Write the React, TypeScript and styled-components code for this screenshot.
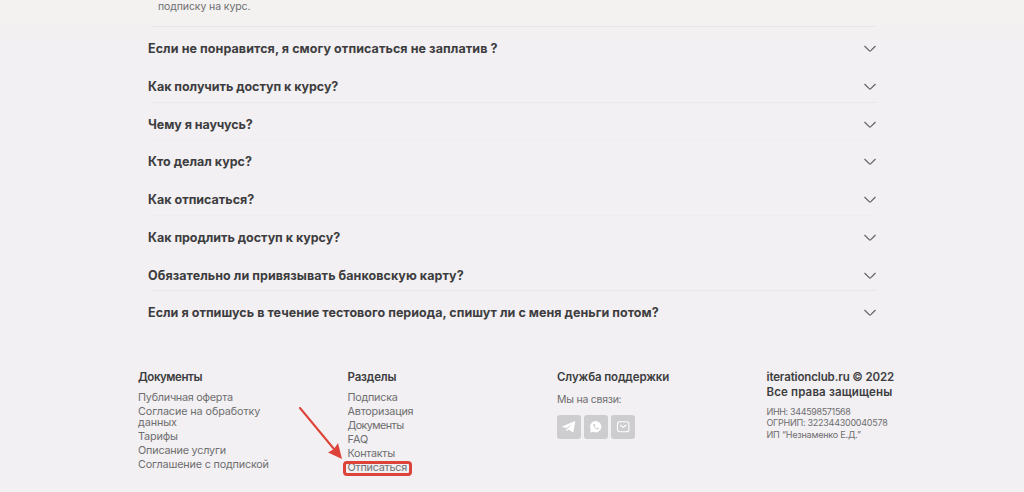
import styled, { createGlobalStyle } from 'styled-components';

interface Entry {
  text: string;
  tracking?: number;
  line?: string;
}

const colors = {
  heading: '#3d3d3f',
  text: '#6e6e70',
  line: '#e9e7e9',
  faintLine: '#eeecee',
  social: '#cdccce',
  red: '#dd4338'
};

const questions: Entry[] = [
  { text: 'Если не понравится, я смогу отписаться не заплатив ?', tracking: 0.08, line: colors.line },
  { text: 'Как получить доступ к курсу?', tracking: -0.04 },
  { text: 'Чему я научусь?', tracking: -0.06, line: colors.line },
  { text: 'Кто делал курс?', line: colors.faintLine },
  { text: 'Как отписаться?' },
  { text: 'Как продлить доступ к курсу?', tracking: -0.03, line: colors.faintLine },
  { text: 'Обязательно ли привязывать банковскую карту?', tracking: 0.06 },
  {
    text: 'Если я отпишусь в течение тестового периода, спишут ли с меня деньги потом?',
    tracking: 0.04,
    line: colors.line
  }
];

const documents: Entry[] = [
  { text: 'Публичная оферта', tracking: -0.25 },
  { text: 'Согласие на обработку данных', tracking: -0.1 },
  { text: 'Тарифы', tracking: -0.15 },
  { text: 'Описание услуги', tracking: -0.2 },
  { text: 'Соглашение с подпиской', tracking: -0.18 }
];

const sections: Entry[] = [
  { text: 'Подписка', tracking: -0.25 },
  { text: 'Авторизация', tracking: -0.2 },
  { text: 'Документы', tracking: -0.6 },
  { text: 'FAQ' },
  { text: 'Контакты', tracking: -0.3 }
];

const legal: Entry[] = [
  { text: 'ИНН: 344598571568', tracking: -0.35 },
  { text: 'ОГРНИП: 322344300040578', tracking: -0.26 },
  { text: 'ИП “Незнаменко Е.Д.”', tracking: -0.2 }
];

const GlobalStyle = createGlobalStyle`
  body {
    margin: 0;
    background: #f2f0f2;
    font-family: Inter, 'Open Sans', sans-serif;
    overflow: hidden;
  }
`;

const Page = styled.div`
  box-sizing: border-box;
  height: 492px;
  overflow: hidden;
  background: linear-gradient(#f3f2f0 0, #f3f2f0 12px, #f2f0f2 44px);
`;

const Faq = styled.section`
  width: 728px;
  margin-left: 148px;
`;

const Answer = styled.p`
  box-sizing: border-box;
  height: 26px;
  margin: 0;
  padding-left: 10px;
  color: ${colors.text};
  font-size: 10.5px;
  line-height: 13px;
  letter-spacing: -0.1px;
`;

const Question = styled.div<{ $line: string }>`
  display: flex;
  align-items: center;
  justify-content: space-between;
  box-sizing: border-box;
  height: 37.75px;
  padding: 8.5px 0 0;
  background: linear-gradient(${(props) => props.$line}, ${(props) => props.$line}) 4px 0 / 724px 1px
    no-repeat;
`;

const QuestionText = styled.span<{ $tracking?: number }>`
  color: ${colors.heading};
  font-size: 12.5px;
  font-weight: 700;
  line-height: 16px;
  letter-spacing: ${(props) => props.$tracking ?? 0}px;
  white-space: nowrap;
`;

const Chevron = styled.svg`
  width: 12px;
  height: 8px;
  fill: none;
  stroke: #626264;
  stroke-width: 1.2;
`;

const Footer = styled.footer`
  display: grid;
  grid-template-columns: 209.5px 209.5px 209.5px 1fr;
  margin: 42px 0 0 138px;
`;

const Column = styled.div`
  display: flex;
  flex-direction: column;
  align-items: flex-start;
`;

const Title = styled.h4<{ $tracking?: number }>`
  margin: 0;
  color: ${colors.heading};
  font-size: 11.5px;
  font-weight: 600;
  line-height: 15px;
  letter-spacing: ${(props) => props.$tracking ?? 0}px;
  white-space: nowrap;
`;

const Links = styled.div`
  display: flex;
  flex-direction: column;
  align-items: flex-start;
  gap: 3.1px;
  margin-top: 6.8px;
`;

const FooterLink = styled.a<{ $tracking?: number }>`
  position: relative;
  max-width: 140px;
  color: ${colors.text};
  font-size: 10.8px;
  line-height: 11px;
  letter-spacing: ${(props) => props.$tracking ?? 0}px;
`;

const Frame = styled.span`
  position: absolute;
  top: -1px;
  left: -4.5px;
  box-sizing: border-box;
  width: 68.5px;
  height: 14.5px;
  border: 3px solid ${colors.red};
  border-radius: 4px;
`;

const Arrow = styled.svg`
  position: absolute;
  top: -55px;
  left: -50px;
  width: 46px;
  height: 54px;
`;

const Contact = styled.span`
  margin-top: 8px;
  color: ${colors.text};
  font-size: 10.5px;
  line-height: 14px;
  letter-spacing: -0.25px;
`;

const Socials = styled.div`
  display: flex;
  gap: 3px;
  margin-top: 8px;
`;

const SocialButton = styled.a`
  display: flex;
  width: 24px;
  height: 24px;
  border-radius: 3px;
  background: ${colors.social};
`;

const Legal = styled.div`
  display: flex;
  flex-direction: column;
  margin-top: 6px;
`;

const LegalLine = styled.span<{ $tracking?: number }>`
  color: ${colors.text};
  font-size: 9px;
  line-height: 11.4px;
  letter-spacing: ${(props) => props.$tracking ?? 0}px;
`;

const App: React.FC = () => {
  return (
    <>
      <GlobalStyle />
      <Page>
        <Faq>
          <Answer>подписку на курс.</Answer>
          {questions.map(({ text, tracking, line }) => (
            <Question key={text} $line={line ?? 'transparent'}>
              <QuestionText $tracking={tracking}>{text}</QuestionText>
              <Chevron viewBox="0 0 12 8">
                <path d="M0.5 1 L5.2 5.7 Q6 6.5 6.8 5.7 L11.5 1" />
              </Chevron>
            </Question>
          ))}
        </Faq>
        <Footer>
          <Column>
            <Title $tracking={-0.45}>Документы</Title>
            <Links>
              {documents.map(({ text, tracking }) => (
                <FooterLink key={text} $tracking={tracking}>
                  {text}
                </FooterLink>
              ))}
            </Links>
          </Column>
          <Column>
            <Title $tracking={-0.15}>Разделы</Title>
            <Links>
              {sections.map(({ text, tracking }) => (
                <FooterLink key={text} $tracking={tracking}>
                  {text}
                </FooterLink>
              ))}
              <FooterLink $tracking={-0.25}>
                Отписаться
                <Frame />
                <Arrow viewBox="0 0 46 54">
                  <path d="M2 1 L36 42" stroke={colors.red} strokeWidth="2" strokeLinecap="round" />
                  <path d="M44 52 L30 45.5 L36 42 L40 36 Z" fill={colors.red} />
                </Arrow>
              </FooterLink>
            </Links>
          </Column>
          <Column>
            <Title $tracking={-0.12}>Служба поддержки</Title>
            <Contact>Мы на связи:</Contact>
            <Socials>
              <SocialButton>
                <svg width="24" height="24" viewBox="0 0 24 24">
                  <path
                    d="M5.3 11.4 L17.3 6.2 Q18.4 5.9 18.3 7 L16.5 16.4 Q16.2 17.5 15.2 16.9 L11.8 14.4 L10.3 15.9 Q9.7 16.4 9.6 15.5 L9 12.9 L5.3 12.1 Q4.5 11.8 5.3 11.4 Z"
                    fill="#fff"
                  />
                  <path d="M9.4 13 L15.2 9 L10.6 13.5 L10 15.3" fill={colors.social} />
                </svg>
              </SocialButton>
              <SocialButton>
                <svg width="24" height="24" viewBox="0 0 24 24">
                  <path d="M6 17.6 L6.8 14.7 A5.7 5.7 0 1 1 9 16.8 Z" fill="#fff" />
                  <path
                    d="M9.8 9 Q9 9.4 9.2 10.6 Q10.2 13.7 13.3 14.5 Q14.6 14.6 14.8 13.3 L13.3 12.5 L12.5 13.2 Q11.2 12.6 10.6 11.4 L11.2 10.6 L10.6 9.1 Z"
                    fill={colors.social}
                  />
                </svg>
              </SocialButton>
              <SocialButton>
                <svg width="24" height="24" viewBox="0 0 24 24" fill="none" stroke="#fff" strokeWidth="1.1">
                  <rect x="6.5" y="6.7" width="11.4" height="10" rx="2.2" />
                  <path d="M9.2 10 L11.7 12 Q12.2 12.4 12.7 12 L15.2 10" />
                </svg>
              </SocialButton>
            </Socials>
          </Column>
          <Column>
            <Title $tracking={-0.13}>iterationclub.ru © 2022</Title>
            <Title $tracking={0.15}>Все права защищены</Title>
            <Legal>
              {legal.map(({ text, tracking }) => (
                <LegalLine key={text} $tracking={tracking}>
                  {text}
                </LegalLine>
              ))}
            </Legal>
          </Column>
        </Footer>
      </Page>
    </>
  );
};

export default App;
